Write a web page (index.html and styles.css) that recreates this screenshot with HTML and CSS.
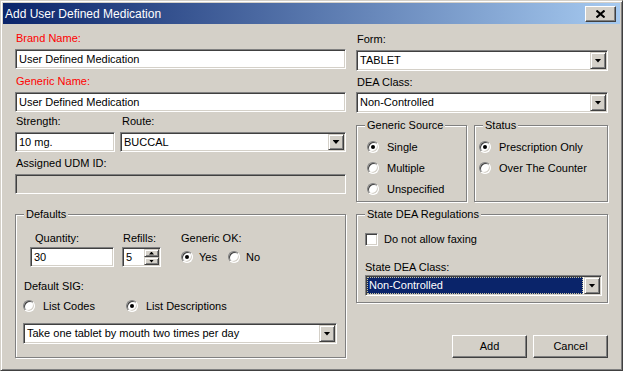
FILE: index.html
```html
<!DOCTYPE html>
<html lang="en">
<head>
  <meta charset="UTF-8">
  <title>Add User Defined Medication</title>
  <link rel="stylesheet" href="styles.css">
</head>
<body>
  <div class="window">
    <!-- Barra de título -->
    <div class="titlebar">
      <span class="title">Add User Defined Medication</span>
      <span class="close">
        <svg width="9" height="8" viewBox="0 0 9 8"><path d="M0.5 0.5 L8.5 7.5 M8.5 0.5 L0.5 7.5" stroke="#000" stroke-width="2"/></svg>
      </span>
    </div>

    <div class="content">
      <!-- Columna izquierda -->
      <div class="col-left">
        <div class="label req">Brand Name:</div>
        <div class="field">User Defined Medication</div>

        <div class="label req generic-label">Generic Name:</div>
        <div class="field">User Defined Medication</div>

        <div class="row strength-row">
          <div class="strength">
            <div class="label">Strength:</div>
            <div class="field">10 mg.</div>
          </div>
          <div class="route">
            <div class="label">Route:</div>
            <div class="combo short"><span class="combo-text">BUCCAL</span><span class="drop"></span></div>
          </div>
        </div>

        <div class="label udm-label">Assigned UDM ID:</div>
        <div class="field disabled"></div>

        <div class="group defaults">
          <span class="legend">Defaults</span>
          <div class="row">
            <div class="qty">
              <div class="label">Quantity:</div>
              <div class="field">30</div>
            </div>
            <div class="refills">
              <div class="label">Refills:</div>
              <div class="field spin">
                <span class="spin-text">5</span>
                <span class="spin-btns"><span class="spin-up"></span><span class="spin-down"></span></span>
              </div>
            </div>
            <div class="generic-ok">
              <div class="label">Generic OK:</div>
              <div class="opts">
                <span class="opt"><span class="radio on"></span>Yes</span>
                <span class="opt opt-no"><span class="radio"></span>No</span>
              </div>
            </div>
          </div>
          <div class="label sig-label">Default SIG:</div>
          <div class="opts sig-opts">
            <span class="opt"><span class="radio"></span>List Codes</span>
            <span class="opt opt-desc"><span class="radio on"></span>List Descriptions</span>
          </div>
          <div class="combo sig-combo"><span class="combo-text">Take one tablet by mouth two times per day</span><span class="drop"></span></div>
        </div>
      </div>

      <!-- Columna derecha -->
      <div class="col-right">
        <div class="label form-label">Form:</div>
        <div class="combo"><span class="combo-text">TABLET</span><span class="drop"></span></div>

        <div class="label dea-label">DEA Class:</div>
        <div class="combo"><span class="combo-text">Non-Controlled</span><span class="drop"></span></div>

        <div class="row groups-row">
          <div class="group source">
            <span class="legend">Generic Source</span>
            <div class="opt line"><span class="radio on"></span>Single</div>
            <div class="opt line"><span class="radio"></span>Multiple</div>
            <div class="opt line"><span class="radio"></span>Unspecified</div>
          </div>
          <div class="group status">
            <span class="legend">Status</span>
            <div class="opt line"><span class="radio on"></span>Prescription Only</div>
            <div class="opt line"><span class="radio"></span>Over The Counter</div>
          </div>
        </div>

        <div class="group state-dea">
          <span class="legend">State DEA Regulations</span>
          <div class="opt check-line"><span class="check"></span>Do not allow faxing</div>
          <div class="label state-label">State DEA Class:</div>
          <div class="combo state-combo"><span class="combo-text sel">Non-Controlled</span><span class="drop"></span></div>
        </div>

        <div class="buttons">
          <span class="btn">Add</span>
          <span class="btn">Cancel</span>
        </div>
      </div>
    </div>
  </div>
</body>
</html>
```

FILE: styles.css
```css
body {
  margin: 0;
  font-family: "Liberation Sans", Arial, sans-serif;
  font-size: 11px;
  color: #000;
  background-color: #d4d0c8;
}
.window {
  width: 623px;
  height: 371px;
  box-sizing: border-box;
  padding: 2px;
  background-color: #d4d0c8;
  border: 1px solid;
  border-color: #d4d0c8 #404040 #404040 #d4d0c8;
  box-shadow: inset 1px 1px #fff, inset -1px -1px #808080;
}
.titlebar {
  height: 21px;
  display: flex;
  align-items: center;
  padding-left: 2px;
  background: linear-gradient(to right, #0a246a, #a6caf0);
  color: #fff;
}
.title {
  flex: 1;
  font-size: 12px;
}
.close {
  width: 31px;
  height: 16px;
  margin-right: 4px;
  box-sizing: border-box;
  display: flex;
  align-items: center;
  justify-content: center;
  background-color: #d4d0c8;
  border: 1px solid;
  border-color: #fff #404040 #404040 #fff;
  box-shadow: inset -1px -1px #808080;
}
.content {
  display: flex;
  gap: 10px;
  padding: 8px 12px 0 12px;
}
.col-left {
  width: 331px;
}
.col-right {
  width: 252px;
}
.row {
  display: flex;
}
.label {
  height: 13px;
  line-height: 13px;
  margin-bottom: 4px;
  padding-left: 1px;
  white-space: nowrap;
}
.req {
  color: #f00;
}
.field, .combo {
  height: 20px;
  box-sizing: border-box;
  background-color: #fff;
  border: 1px solid;
  border-color: #808080 #fff #fff #808080;
  box-shadow: inset 1px 1px #404040, inset -1px -1px #d4d0c8;
  white-space: nowrap;
}
.field {
  padding: 0 3px;
  line-height: 18px;
}
.field.disabled {
  background-color: #d4d0c8;
}
.combo {
  height: 21px;
  display: flex;
  padding: 1px;
}
.combo.short {
  height: 20px;
}
.combo-text {
  flex: 1;
  padding-left: 2px;
  line-height: 17px;
  overflow: hidden;
}
.drop, .spin-up, .spin-down, .btn {
  box-sizing: border-box;
  background-color: #d4d0c8;
  border: 1px solid;
  border-color: #d4d0c8 #404040 #404040 #d4d0c8;
  box-shadow: inset 1px 1px #fff, inset -1px -1px #808080;
}
.drop {
  width: 16px;
  display: flex;
  align-items: center;
  justify-content: center;
}
.drop::after {
  content: "";
  width: 7px;
  height: 4px;
  background-color: #000;
  clip-path: polygon(0 0, 100% 0, 50% 100%);
}

/* columna izquierda */
.generic-label {
  margin-top: 6px;
}
.strength-row {
  gap: 5px;
  margin-top: 3px;
}
.strength {
  width: 100px;
}
.route {
  width: 226px;
}
.route .label {
  padding-left: 2px;
}
.udm-label {
  margin-top: 5px;
}

/* cajas de grupo */
.group {
  position: relative;
  box-sizing: border-box;
  border: 1px solid #808080;
  box-shadow: inset 1px 1px #fff, 1px 1px #fff;
}
.legend {
  position: absolute;
  top: -7px;
  left: 8px;
  padding: 0 2px;
  line-height: 13px;
  background-color: #d4d0c8;
  white-space: nowrap;
}
.defaults {
  margin-top: 20px;
  height: 144px;
  padding: 17px 8px 0 8px;
}
.qty {
  width: 84px;
  margin-left: 6px;
}
.qty .label {
  padding-left: 5px;
  margin-bottom: 2px;
}
.refills {
  width: 39px;
  margin-left: 8px;
}
.refills .label, .generic-ok .label {
  margin-bottom: 2px;
}
.spin {
  display: flex;
  padding: 1px 1px 1px 3px;
}
.spin-text {
  flex: 1;
  line-height: 16px;
}
.spin-btns {
  width: 15px;
  display: flex;
  flex-direction: column;
}
.spin-up, .spin-down {
  flex: 1;
  display: flex;
  align-items: center;
  justify-content: center;
}
.spin-up::after, .spin-down::after {
  content: "";
  width: 5px;
  height: 3px;
  background-color: #000;
}
.spin-up::after {
  clip-path: polygon(50% 0, 100% 100%, 0 100%);
}
.spin-down::after {
  clip-path: polygon(0 0, 100% 0, 50% 100%);
}
.generic-ok {
  margin-left: 19px;
}
.opts {
  display: flex;
  height: 20px;
  align-items: center;
}
.opt {
  display: flex;
  align-items: center;
  gap: 6px;
  white-space: nowrap;
}
.generic-ok .opts {
  margin-left: 1px;
}
.opt-no {
  margin-left: 11px;
}
.sig-label {
  margin-top: 13px;
  padding-left: 0;
  margin-bottom: 3px;
}
.sig-opts {
  margin-left: -1px;
}
.sig-opts .opt {
  gap: 8px;
}
.opt-desc {
  margin-left: 31px;
}
.sig-combo {
  margin: 7px 0 0 -1px;
  width: 314px;
}
.radio {
  width: 12px;
  height: 12px;
  box-sizing: border-box;
  border-radius: 50%;
  border: 1px solid;
  border-color: #808080 #fff #fff #808080;
  box-shadow: inset 1px 1px #404040, inset -1px -1px #d4d0c8;
  background-color: #fff;
  display: flex;
  align-items: center;
  justify-content: center;
}
.radio.on::after {
  content: "";
  width: 4px;
  height: 4px;
  border-radius: 50%;
  background-color: #000;
}
.check {
  width: 13px;
  height: 13px;
  box-sizing: border-box;
  border: 1px solid;
  border-color: #808080 #fff #fff #808080;
  box-shadow: inset 1px 1px #404040, inset -1px -1px #d4d0c8;
  background-color: #fff;
}

/* columna derecha */
.form-label {
  margin-top: 1px;
}
.dea-label {
  margin-top: 5px;
  margin-bottom: 3px;
}
.groups-row {
  margin-top: 12px;
  gap: 7px;
}
.source, .status {
  height: 77px;
  padding-top: 10px;
}
.source {
  width: 111px;
  padding-left: 10px;
}
.status {
  flex: 1;
  padding-left: 4px;
}
.line {
  height: 21px;
  gap: 8px;
}
.state-dea {
  margin-top: 12px;
  height: 89px;
  padding: 14px 4px 0 8px;
}
.check-line {
  height: 20px;
  gap: 6px;
}
.state-label {
  margin-top: 12px;
  margin-bottom: 1px;
  padding-left: 0;
}
.state-combo {
  width: 237px;
}
.sel {
  background-color: #0a246a;
  color: #fff;
  border: 1px dotted #c8c4a0;
  line-height: 15px;
  padding-left: 1px;
  margin-right: 1px;
}
.buttons {
  display: flex;
  justify-content: flex-end;
  gap: 6px;
  margin-top: 32px;
}
.btn {
  width: 75px;
  height: 23px;
  line-height: 21px;
  text-align: center;
  border-color: #fff #404040 #404040 #fff;
  box-shadow: inset -1px -1px #808080;
}
```
